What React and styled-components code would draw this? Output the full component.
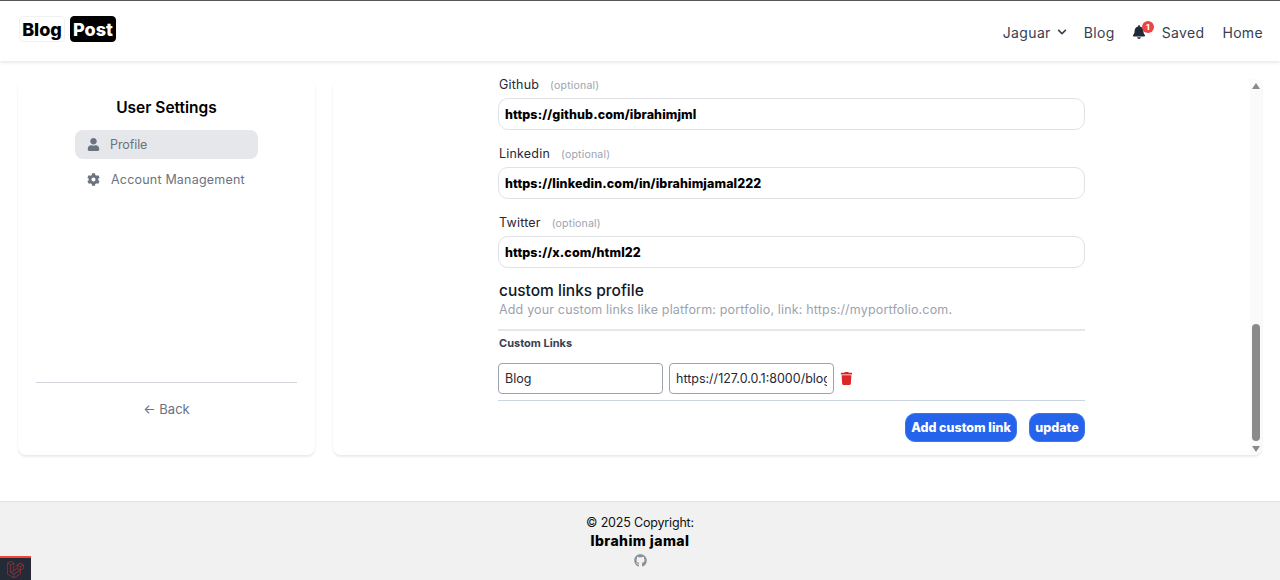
import styled, { createGlobalStyle } from 'styled-components';
import { FaUser, FaCog, FaChevronDown, FaBell, FaTrash, FaGithub, FaLaravel } from 'react-icons/fa';

const GlobalStyle = createGlobalStyle`
    * { box-sizing: border-box; }
    html, body { margin: 0; height: 100%; overflow: hidden; background: #fff; }
    body { font-family: Inter, "Open Sans", sans-serif; }
`;

const Page = styled.div`
    position: relative;
    height: 580px;
    display: flex;
    flex-direction: column;
    overflow: hidden;
    border-top: 1px solid #555;
`;

const Navbar = styled.nav`
    height: 60px;
    flex: none;
    display: flex;
    justify-content: space-between;
    padding: 15px 17px 0 19px;
    background: #fff;
    box-shadow: 0 1px 4px rgba(0, 0, 0, 0.12);
    position: relative;
`;

const Logo = styled.div`
    display: flex;
    gap: 5px;
    height: 26px;
`;

const LogoPart = styled.span`
    width: 46px;
    display: flex;
    align-items: center;
    justify-content: center;
    font-size: 18px;
    font-weight: 800;
    letter-spacing: 0;
    border-radius: 4px;
    color: ${(p) => (p.$dark ? '#fff' : '#000')};
    background: ${(p) => (p.$dark ? '#000' : '#fff')};
    border: 1px solid ${(p) => (p.$dark ? '#000' : '#f1f1f1')};
`;

const NavLinks = styled.div`
    display: flex;
    align-items: center;
    height: 32px;
    color: #374151;
    font-size: 14px;
    letter-spacing: 0.35px;
`;

const NavItem = styled.span`
    display: flex;
    align-items: center;
    gap: 6px;
    margin-left: ${(p) => p.$gap || 0}px;
`;

const BellWrap = styled.span`
    position: relative;
    display: flex;
    margin-left: 17px;
    color: #1f2937;
    font-size: 14px;
`;

const Badge = styled.span`
    position: absolute;
    top: -4px;
    left: 10px;
    width: 12px;
    height: 12px;
    border-radius: 50%;
    background: #ef4444;
    color: #fff;
    font-size: 8px;
    font-weight: 800;
    letter-spacing: 0;
    display: flex;
    align-items: center;
    justify-content: center;
`;

const Content = styled.main`
    height: 376px;
    margin-top: 18px;
    padding: 0 18px;
    display: flex;
    gap: 18px;
    flex: none;
`;

const Card = styled.section`
    background: #fff;
    border-radius: 8px;
    box-shadow: 0 2px 2px rgba(0, 0, 0, 0.08), 0 0 2px rgba(0, 0, 0, 0.03);
`;

const Sidebar = styled(Card)`
    width: 297px;
    flex: none;
    display: flex;
    flex-direction: column;
    align-items: center;
    padding: 19px 18px 0;
`;

const SideTitle = styled.h2`
    margin: 0;
    font-size: 15.5px;
    line-height: 20px;
    font-weight: 600;
    color: #000;
`;

const SideMenu = styled.div`
    width: 183px;
    margin-top: 12px;
    display: flex;
    flex-direction: column;
    gap: 6px;
    flex: 1;
`;

const SideLink = styled.a`
    height: 29px;
    display: flex;
    align-items: center;
    gap: ${(p) => p.$gap}px;
    padding-left: 12px;
    border-radius: 8px;
    font-size: 12.5px;
    letter-spacing: ${(p) => p.$spacing}px;
    white-space: nowrap;
    color: #6b7280;
    background: ${(p) => (p.$active ? '#e5e7eb' : 'transparent')};
    svg { font-size: 13px; flex: none; }
`;

const SideFooter = styled.div`
    width: 100%;
    height: 73px;
    border-top: 1px solid #d1d5db;
    padding-top: 17px;
    text-align: center;
    font-size: 13px;
    line-height: 18px;
    color: #6b7280;
`;

const Panel = styled(Card)`
    flex: 1;
    display: flex;
`;

const FormArea = styled.div`
    flex: 1;
    padding-left: 165px;
`;

const Form = styled.form`
    width: 587px;
`;

const Field = styled.div`
    margin-bottom: 18px;
    &:nth-of-type(3) { margin-bottom: 13px; }
`;

const LabelRow = styled.div`
    display: flex;
    align-items: baseline;
    gap: 11px;
    height: 19px;
    padding-left: 1px;
    line-height: 11px;
    font-size: 12.5px;
    color: #1f2937;
    letter-spacing: 0.2px;
`;

const Optional = styled.span`
    font-size: 10.5px;
    color: #9ca3af;
`;

const TextInput = styled.input`
    display: block;
    width: 100%;
    height: 32px;
    padding: 0 6px;
    border: 1px solid #e0e2e7;
    border-radius: 10px;
    outline: none;
    font-family: inherit;
    font-size: 12.5px;
    font-weight: 800;
    letter-spacing: 0.1px;
    color: #000;
    background: #fff;
`;

const SectionTitle = styled.h3`
    margin: 0;
    padding-left: 1px;
    font-size: 15.5px;
    line-height: 20px;
    font-weight: 500;
    color: #111827;
`;

const Helper = styled.p`
    margin: 0;
    padding-left: 1px;
    font-size: 12.5px;
    line-height: 18px;
    letter-spacing: 0.17px;
    color: #9ca3af;
`;

const LinksBox = styled.div`
    margin-top: 10px;
    height: 72px;
    border-top: 2px solid #e5e7eb;
    border-bottom: 1px solid #cbd5e1;
`;

const LinksLabel = styled.div`
    padding-left: 1px;
    font-size: 11px;
    line-height: 14px;
    margin-top: 5px;
    font-weight: 700;
    color: #374151;
`;

const LinkRow = styled.div`
    display: flex;
    align-items: center;
    gap: 6px;
    margin-top: 13px;
    svg { font-size: 13px; color: #dc2626; }
`;

const LinkInput = styled.input`
    width: 165px;
    height: 31px;
    padding: 0 6px;
    border: 1px solid #9ca3af;
    border-radius: 4px;
    outline: none;
    font-family: inherit;
    font-size: 12.5px;
    color: #1f2937;
    background: #fff;
`;

const Actions = styled.div`
    display: flex;
    justify-content: flex-end;
    gap: 12px;
    margin-top: 12px;
`;

const Button = styled.button`
    height: 29px;
    width: ${(p) => p.$w}px;
    padding: 0;
    border: 1px solid #3b76ee;
    border-radius: 10px;
    background: #2563eb;
    color: #fff;
    font-family: inherit;
    font-size: 12.5px;
    font-weight: 800;
`;

const Scrollbar = styled.div`
    width: 12px;
    flex: none;
    background: #fafafa;
    border-radius: 0 8px 8px 0;
    display: flex;
    flex-direction: column;
    align-items: center;
    padding: 4px 0 3px;
`;

const Arrow = styled.span`
    width: 0;
    height: 0;
    flex: none;
    border-left: 4.5px solid transparent;
    border-right: 4.5px solid transparent;
    border-${(p) => (p.$down ? 'top' : 'bottom')}: 6px solid #8a8a8a;
`;

const Thumb = styled.div`
    width: 8px;
    height: 117px;
    border-radius: 4px;
    background: #8a8a8a;
    margin-top: auto;
    margin-bottom: 5px;
`;

const Footer = styled.footer`
    margin-top: 46px;
    flex: 1;
    background: #f1f1f1;
    border-top: 1px solid #e3e3e3;
    padding-top: 12px;
    text-align: center;
    color: #111;
`;

const Copy = styled.div`
    font-size: 12.5px;
    line-height: 18px;
    letter-spacing: -0.18px;
`;

const Author = styled.div`
    font-size: 14px;
    line-height: 18px;
    font-weight: 800;
    letter-spacing: 0.45px;
    color: #000;
`;

const GitLink = styled.div`
    margin-top: 4px;
    font-size: 13px;
    line-height: 0;
    color: #8b8f98;
`;

const Debugbar = styled.div`
    position: absolute;
    left: 0;
    bottom: 0;
    width: 31px;
    height: 24px;
    background: #252a37;
    border-top: 2px solid #f4433c;
    display: flex;
    align-items: center;
    justify-content: center;
    color: #c9302c;
    font-size: 17px;
`;

const socials = [
    { label: 'Github', value: 'https://github.com/ibrahimjml' },
    { label: 'Linkedin', value: 'https://linkedin.com/in/ibrahimjamal222' },
    { label: 'Twitter', value: 'https://x.com/html22' },
];

const App = () => {
    return (
        <Page>
            <GlobalStyle />
            <Navbar>
                <Logo>
                    <LogoPart>Blog</LogoPart>
                    <LogoPart $dark>Post</LogoPart>
                </Logo>
                <NavLinks>
                    <NavItem>Jaguar <FaChevronDown size={10} /></NavItem>
                    <NavItem $gap={17}>Blog</NavItem>
                    <BellWrap><FaBell /><Badge>1</Badge></BellWrap>
                    <NavItem $gap={16}>Saved</NavItem>
                    <NavItem $gap={18}>Home</NavItem>
                </NavLinks>
            </Navbar>
            <Content>
                <Sidebar>
                    <SideTitle>User Settings</SideTitle>
                    <SideMenu>
                        <SideLink $active $gap={10} $spacing={-0.1}><FaUser />Profile</SideLink>
                        <SideLink $gap={11} $spacing={0.2}><FaCog />Account Management</SideLink>
                    </SideMenu>
                    <SideFooter>← Back</SideFooter>
                </Sidebar>
                <Panel>
                    <FormArea>
                        <Form>
                            {socials.map((s) => (
                                <Field key={s.label}>
                                    <LabelRow>{s.label} <Optional>(optional)</Optional></LabelRow>
                                    <TextInput readOnly defaultValue={s.value} />
                                </Field>
                            ))}
                            <SectionTitle>custom links profile</SectionTitle>
                            <Helper>Add your custom links like platform: portfolio, link: https://myportfolio.com.</Helper>
                            <LinksBox>
                                <LinksLabel>Custom Links</LinksLabel>
                                <LinkRow>
                                    <LinkInput readOnly defaultValue="Blog" />
                                    <LinkInput readOnly defaultValue="https://127.0.0.1:8000/blog" />
                                    <FaTrash />
                                </LinkRow>
                            </LinksBox>
                            <Actions>
                                <Button type="button" $w={112}>Add custom link</Button>
                                <Button type="button" $w={56}>update</Button>
                            </Actions>
                        </Form>
                    </FormArea>
                    <Scrollbar>
                        <Arrow />
                        <Thumb />
                        <Arrow $down />
                    </Scrollbar>
                </Panel>
            </Content>
            <Footer>
                <Copy>© 2025 Copyright:</Copy>
                <Author>Ibrahim jamal</Author>
                <GitLink><FaGithub /></GitLink>
            </Footer>
            <Debugbar><FaLaravel /></Debugbar>
        </Page>
    );
};

export default App;
